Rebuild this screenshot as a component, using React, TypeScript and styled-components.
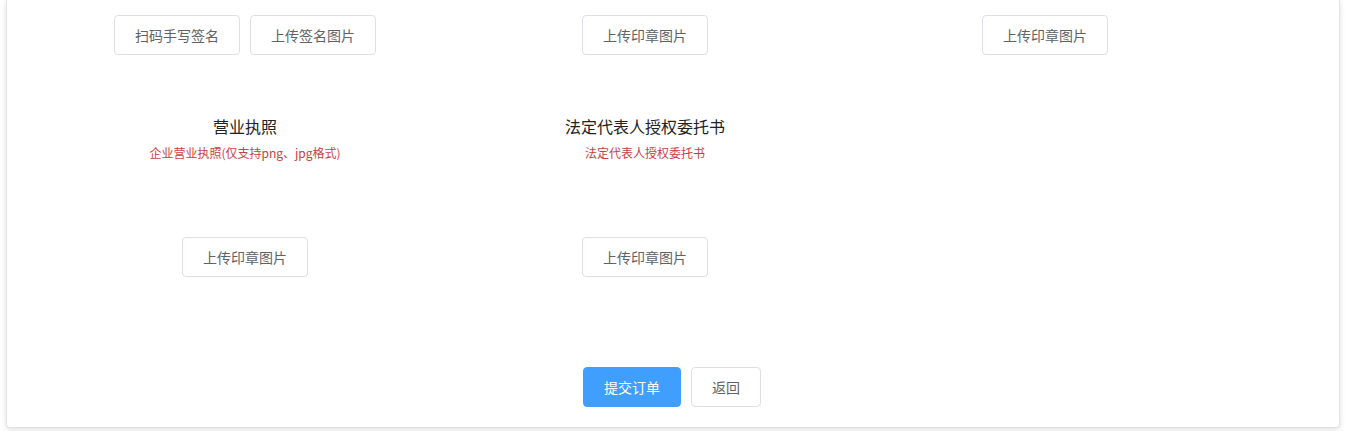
import React from "react";
import styled, { createGlobalStyle } from "styled-components";

const Global = createGlobalStyle`
  html, body { margin: 0; padding: 0; background: #ffffff; }
  body { font-family: "Noto Sans CJK SC", "Noto Sans", sans-serif; overflow: hidden; }
`;

const Page = styled.div`
  padding: 0 6px 3px 6px;
`;

const Card = styled.div`
  background: #fff;
  border: 1px solid #e2e2e2;
  border-top: none;
  border-radius: 0 0 4px 4px;
  box-shadow: 0 2px 6px rgba(0, 0, 0, 0.12);
  padding: 15px 20px 20px 38px;
`;

const Grid = styled.div`
  display: grid;
  grid-template-columns: repeat(3, 400px);
  row-gap: 60px;
`;

const Item = styled.div`
  display: flex;
  flex-direction: column;
  align-items: center;
`;

const Title = styled.div`
  font-size: 16px;
  line-height: 22px;
  color: #222;
`;

const Sub = styled.div`
  margin-top: 7px;
  font-size: 12px;
  line-height: 18px;
  color: #c9403f;
`;

const Preview = styled.div`
  height: 75px;
`;

const Actions = styled.div`
  display: flex;
  justify-content: center;
  gap: 10px;
`;

const Btn = styled.button<{ $primary?: boolean }>`
  box-sizing: border-box;
  height: 40px;
  padding: 0 20px;
  font-family: inherit;
  font-size: 14px;
  line-height: 1;
  border-radius: 4px;
  border: 1px solid ${(p) => (p.$primary ? "#409eff" : "#dcdfe6")};
  background: ${(p) => (p.$primary ? "#409eff" : "#fff")};
  color: ${(p) => (p.$primary ? "#fff" : "#606266")};
  cursor: pointer;
  white-space: nowrap;
`;

const Footer = styled.div`
  margin-top: 90px;
  display: flex;
  justify-content: center;
  gap: 10px;
  margin-left: -20px;
`;

export default function App() {
  return (
    <Page>
      <Global />
      <Card>
        <Grid>
          <Item>
            <Actions>
              <Btn>扫码手写签名</Btn>
              <Btn>上传签名图片</Btn>
            </Actions>
          </Item>
          <Item>
            <Actions>
              <Btn>上传印章图片</Btn>
            </Actions>
          </Item>
          <Item>
            <Actions>
              <Btn>上传印章图片</Btn>
            </Actions>
          </Item>
          <Item>
            <Title>营业执照</Title>
            <Sub>企业营业执照(仅支持png、jpg格式)</Sub>
            <Preview />
            <Actions>
              <Btn>上传印章图片</Btn>
            </Actions>
          </Item>
          <Item>
            <Title>法定代表人授权委托书</Title>
            <Sub>法定代表人授权委托书</Sub>
            <Preview />
            <Actions>
              <Btn>上传印章图片</Btn>
            </Actions>
          </Item>
        </Grid>
        <Footer>
          <Btn $primary>提交订单</Btn>
          <Btn>返回</Btn>
        </Footer>
      </Card>
    </Page>
  );
}
